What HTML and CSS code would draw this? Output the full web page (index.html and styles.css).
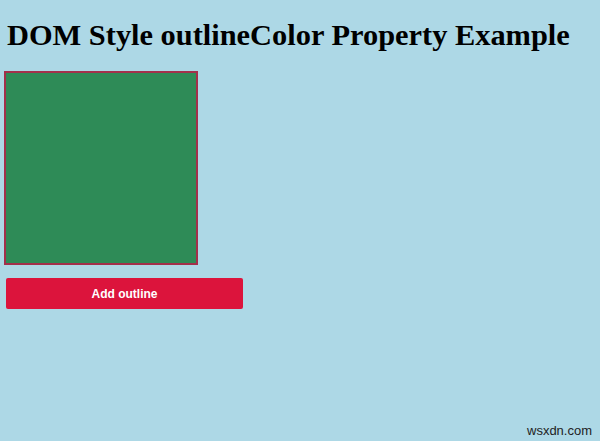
FILE: index.html
```html
<!DOCTYPE html>
<html>
<head>
<meta charset="utf-8">
<link rel="stylesheet" href="styles.css">
</head>
<body>
<h1 class="title">DOM Style outlineColor Property Example</h1>
<div class="box"></div>
<button class="btn">Add outline</button>
<div class="mark">wsxdn.com</div>
</body>
</html>
```
FILE: styles.css
```css
html, body { margin: 0; padding: 0; }
body {
  background: #add8e6;
  width: 600px;
  height: 441px;
  overflow: hidden;
  display: flex;
  flex-direction: column;
  align-items: flex-start;
  font-family: "Liberation Serif", serif;
}
.title {
  margin: 18px 0 0 7px;
  font-size: 30.4px;
  line-height: 34px;
  font-weight: bold;
  color: #000;
}
.box {
  margin: 19px 0 0 4px;
  width: 190px;
  height: 190px;
  background: #2e8b57;
  border: 2px solid #a3304b;
}
.btn {
  margin: 13px 0 0 6px;
  width: 237px;
  height: 31px;
  background: #dc143c;
  border: none;
  border-radius: 2px;
  color: #fff;
  font-family: "Liberation Sans", Arial, sans-serif;
  font-weight: bold;
  font-size: 12px;
  padding: 0;
}
.mark {
  margin: 114px 0 0 527px;
  font-family: "Liberation Sans", Arial, sans-serif;
  font-size: 13px;
  color: #222;
}
```
